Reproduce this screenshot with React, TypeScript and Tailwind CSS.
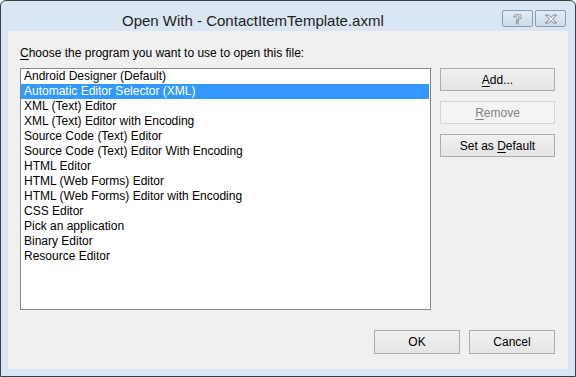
const items = [
  "Android Designer (Default)",
  "Automatic Editor Selector (XML)",
  "XML (Text) Editor",
  "XML (Text) Editor with Encoding",
  "Source Code (Text) Editor",
  "Source Code (Text) Editor With Encoding",
  "HTML Editor",
  "HTML (Web Forms) Editor",
  "HTML (Web Forms) Editor with Encoding",
  "CSS Editor",
  "Pick an application",
  "Binary Editor",
  "Resource Editor",
];

const btn =
  "h-[23px] w-[115px] border border-[#acacac] bg-gradient-to-b from-[#f0f0f0] to-[#e5e5e5] text-[12px] text-black flex items-center justify-center";

function CaptionButton({ children }: { children: React.ReactNode }) {
  return (
    <div className="w-[31px] h-[17px] rounded-[2px] border border-[#8c9db3] bg-gradient-to-b from-[#e4ecf5] to-[#cfdbe9] flex items-center justify-center">
      {children}
    </div>
  );
}

export default function App() {
  const selected = 1;
  return (
    <div
      className="w-[576px] h-[377px] border border-[#3b3f45] rounded-t-[6px] bg-[#dae6f3] flex flex-col text-black"
      style={{ fontFamily: '"Liberation Sans", Arial, sans-serif' }}
    >
      {/* title bar */}
      <div className="h-[30px] flex items-start relative">
        <div className="flex-1 pl-[121px] pt-[11px] text-[15px] leading-[18px] text-[#1e1e1e]">
          Open With - ContactItemTemplate.axml
        </div>
        <div className="flex gap-[2px] pt-[9px] pr-[9px]">
          <CaptionButton>
            <span className="text-[14px] leading-none font-bold text-white [-webkit-text-stroke:0.7px_#6d7b8d]">?</span>
          </CaptionButton>
          <CaptionButton>
            <svg width="14" height="10" viewBox="0 0 14 10">
              <path
                d="M1.5 1 H4.5 L7 3.5 L9.5 1 H12.5 L8.5 5 L12.5 9 H9.5 L7 6.5 L4.5 9 H1.5 L5.5 5 Z"
                fill="#fff"
                stroke="#6d7b8d"
                strokeWidth="1"
                strokeLinejoin="round"
              />
            </svg>
          </CaptionButton>
        </div>
      </div>

      {/* client area */}
      <div className="mx-[7px] mb-[7px] flex-1 bg-[#f0f0f0] flex flex-col px-[12px]">
        <div className="pt-[15px] h-[37px] text-[12px] leading-[15px]">
          <span className="underline underline-offset-2">C</span>hoose the program you want to use to open this file:
        </div>
        <div className="flex gap-[9px]">
          <div className="w-[411px] h-[242px] border border-[#828790] bg-white">
            {items.map((it, i) => (
              <div
                key={it}
                className={
                  "h-[15px] pl-[3px] text-[12px] leading-[15px] whitespace-nowrap " +
                  (i === selected ? "bg-[#3399ff] text-white mr-[1px]" : "")
                }
              >
                {it}
              </div>
            ))}
          </div>
          <div className="flex flex-col gap-[10px]">
            <div className={btn}>
              <span className="underline underline-offset-2">A</span>dd...
            </div>
            <div className="h-[23px] w-[115px] border border-[#d5d5d5] bg-[#f4f4f4] text-[12px] text-[#838383] flex items-center justify-center">
              <span className="underline underline-offset-2">R</span>emove
            </div>
            <div className={btn}>
              Set as&nbsp;<span className="underline underline-offset-2">D</span>efault
            </div>
          </div>
        </div>
        <div className="flex justify-end gap-[9px] pt-[20px] pr-[1px]">
          <div className={btn + " !w-[86px] !h-[24px]"}>OK</div>
          <div className={btn + " !w-[86px] !h-[24px]"}>Cancel</div>
        </div>
      </div>
    </div>
  );
}
